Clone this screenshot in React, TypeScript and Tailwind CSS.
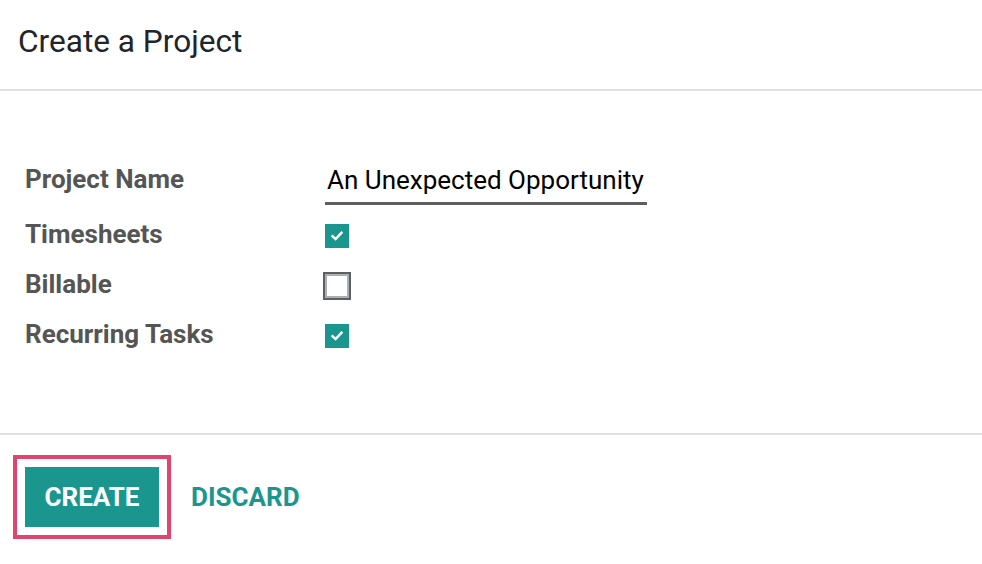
import React from "react";

function CheckedBox() {
  return (
    <div className="w-6 h-6 bg-[#1b968f] flex items-center justify-center">
      <svg width="12" height="10" viewBox="0 0 12 10">
        <path d="M1.5 5.2 L4.6 8 L10.5 1.8" fill="none" stroke="#ffffff" strokeWidth="2.4" strokeLinecap="square" />
      </svg>
    </div>
  );
}

function EmptyBox() {
  return (
    <div className="w-7 h-7 border-2 border-[#5f5f5f] -ml-0.5">
      <div className="w-full h-full border-2 border-[#a9b1b8] bg-white" />
    </div>
  );
}

function Label({ children, top }: { children: React.ReactNode; top: string }) {
  return (
    <div className={`w-[300px] shrink-0 text-[26px] leading-[30px] font-bold text-[#555555] ${top}`}>{children}</div>
  );
}

export default function App() {
  const font = { fontFamily: "Roboto, 'Liberation Sans', sans-serif" };
  return (
    <div className="w-[982px] h-[564px] bg-white overflow-hidden" style={font}>
      <div className="h-[91px] pl-[18px] pt-[23px] border-b-2 border-[#dee2e6]">
        <h1 className="text-[31.6px] leading-[38px] text-[#212529] font-normal">Create a Project</h1>
      </div>
      <div className="h-[344px] pl-[25px] pt-[73px] border-b-2 border-[#dee2e6] flex flex-col">
        <div className="h-[50px] flex items-start">
          <Label top="mt-0">Project Name</Label>
          <div className="mt-[1px] w-[322px] border-b-[3px] border-[#5f5f5f] text-[26px] leading-[30px] text-black pl-[2px] pb-[7px]">
            An Unexpected Opportunity
          </div>
        </div>
        <div className="h-[50px] flex items-start">
          <Label top="mt-[5px]">Timesheets</Label>
          <div className="mt-[10px]"><CheckedBox /></div>
        </div>
        <div className="h-[50px] flex items-start">
          <Label top="mt-[5px]">Billable</Label>
          <div className="mt-[8px]"><EmptyBox /></div>
        </div>
        <div className="h-[50px] flex items-start">
          <Label top="mt-[5px]">Recurring Tasks</Label>
          <div className="mt-[10px]"><CheckedBox /></div>
        </div>
      </div>
      <div className="flex items-center pl-[13px] pt-[20px] gap-[20px]">
        <div className="border-4 border-[#e0456f] p-[8px]">
          <button className="w-[134px] h-[60px] bg-[#1b968f] text-white text-[26px] leading-[30px] font-bold">CREATE</button>
        </div>
        <button className="text-[#1b968f] text-[26px] leading-[30px] font-bold">DISCARD</button>
      </div>
    </div>
  );
}
